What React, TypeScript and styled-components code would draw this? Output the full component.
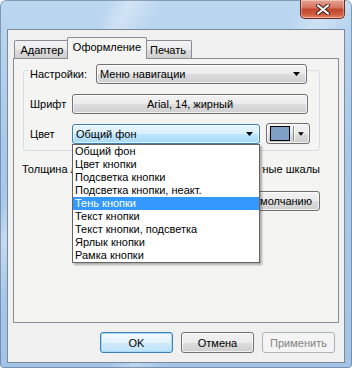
import React from 'react';
import styled, { createGlobalStyle, css } from 'styled-components';

const GlobalStyle = createGlobalStyle`
  html, body { margin: 0; padding: 0; }
  body {
    width: 352px;
    height: 368px;
    overflow: hidden;
    font-family: "Liberation Sans", Arial, sans-serif;
    font-size: 11px;
    color: #000;
  }
`;

const colorItems = [
    'Общий фон',
    'Цвет кнопки',
    'Подсветка кнопки',
    'Подсветка кнопки, неакт.',
    'Тень кнопки',
    'Текст кнопки',
    'Текст кнопки, подсветка',
    'Ярлык кнопки',
    'Рамка кнопки',
];

const Arrow = () => (
    <svg width="7" height="4" viewBox="0 0 7 4">
        <path d="M0 0h7L3.5 4z" fill="#000"/>
    </svg>
);

export default function App() {
    return (
        <>
            <GlobalStyle/>
            <Window>
                <TitleBar>
                    <CloseButton>
                        <svg width="14" height="11" viewBox="0 0 14 11">
                            <path d="M2 1.5l10 8M12 1.5l-10 8" stroke="#3b1a1a" strokeWidth="4" strokeLinecap="round"/>
                            <path d="M2 1.5l10 8M12 1.5l-10 8" stroke="#fff" strokeWidth="2.2" strokeLinecap="round"/>
                        </svg>
                    </CloseButton>
                </TitleBar>
                <Client>
                    <TabStrip>
                        <Tab $width={56}>Адаптер</Tab>
                        <Tab $width={80} $active>Оформление</Tab>
                        <Tab $width={48}>Печать</Tab>
                    </TabStrip>
                    <TabPanel>
                        <GroupBox>
                            <Header>
                                <Legend>Настройки:</Legend>
                                <DropButton $width={211}>
                                    <span>Меню навигации</span>
                                    <Arrow/>
                                </DropButton>
                            </Header>
                            <Row>
                                <Label>Шрифт</Label>
                                <PushButton $width={236}>Arial, 14, жирный</PushButton>
                            </Row>
                            <Row>
                                <Label>Цвет</Label>
                                <ComboWrap>
                                    <DropButton $width={188} $hot>
                                        <span>Общий фон</span>
                                        <Arrow/>
                                    </DropButton>
                                    <ListBox>
                                        {colorItems.map((item, i) => (
                                            <ListItem key={item} $selected={i === 4}>{item}</ListItem>
                                        ))}
                                    </ListBox>
                                </ComboWrap>
                                <ColorButton>
                                    <Swatch/>
                                    <Divider/>
                                    <Arrow/>
                                </ColorButton>
                            </Row>
                        </GroupBox>
                        <OptionsRow>
                            <ClipStart>Толщина линий</ClipStart>
                            <ClipEnd><span>Цветные шкалы</span></ClipEnd>
                        </OptionsRow>
                        <DefaultRow>
                            <PushButton $width={86}><ClipEnd><span>По умолчанию</span></ClipEnd></PushButton>
                        </DefaultRow>
                    </TabPanel>
                    <Footer>
                        <DialogButton $variant="default">OK</DialogButton>
                        <DialogButton>Отмена</DialogButton>
                        <DialogButton $variant="disabled">Применить</DialogButton>
                    </Footer>
                </Client>
            </Window>
        </>
    );
}

const Window = styled.div`
  width: 352px;
  height: 368px;
  box-sizing: border-box;
  display: flex;
  flex-direction: column;
  padding: 0 7px 5px 7px;
  border-radius: 6px 6px 4px 4px;
  background:
    linear-gradient(118deg, rgba(255,255,255,0) 0 20%, rgba(255,255,255,.35) 24%, rgba(255,255,255,0) 30% 55%, rgba(255,255,255,.3) 60%, rgba(255,255,255,0) 66%),
    linear-gradient(180deg, #bcd7f0 0%, #a9c9ea 40%, #a3c4e6 100%);
  box-shadow: inset 0 0 0 1px rgba(60, 80, 110, .45);
`;

const TitleBar = styled.div`
  height: 29px;
  display: flex;
  justify-content: flex-end;
  align-items: flex-start;
  flex-shrink: 0;
`;

const CloseButton = styled.div`
  width: 45px;
  height: 19px;
  box-sizing: border-box;
  margin-right: 0;
  display: flex;
  align-items: center;
  justify-content: center;
  border: 1px solid #6d2a24;
  border-top: none;
  border-radius: 0 0 5px 5px;
  background: linear-gradient(180deg, #e8a493 0%, #d4715d 45%, #c2452f 50%, #cf5c40 80%, #e6876c 100%);
  box-shadow: inset 0 0 0 1px rgba(255,255,255,.35);
`;

const Client = styled.div`
  flex: 1;
  display: flex;
  flex-direction: column;
  border: 1px solid #7b8a9b;
  background: #f0f0f0;
  padding: 7px 5px 8px 5px;
`;

const TabStrip = styled.div`
  display: flex;
  align-items: flex-end;
  height: 21px;
  padding-left: 2px;
  position: relative;
  z-index: 1;
`;

const Tab = styled.div<{ $width: number; $active?: boolean }>`
  width: ${p => p.$width}px;
  box-sizing: border-box;
  height: 18px;
  display: flex;
  align-items: center;
  justify-content: center;
  border: 1px solid #898c95;
  border-bottom: none;
  border-radius: 2px 2px 0 0;
  background: linear-gradient(180deg, #f3f3f3 0%, #ebebeb 50%, #dddddd 51%, #cfcfcf 100%);
  margin-left: -1px;
  ${p => p.$active && css`
    height: 22px;
    margin: 0 -2px -1px -3px;
    padding-bottom: 3px;
    background: #f4f4f2;
    position: relative;
    z-index: 2;
  `}
`;

const TabPanel = styled.div`
  height: 265px;
  box-sizing: border-box;
  border: 1px solid #898c95;
  background: #f4f4f2;
  margin-right: 0;
  padding: 11px 18px 0 9px;
  display: flex;
  flex-direction: column;
`;

const GroupBox = styled.div`
  border: 1px solid #d5dfe5;
  border-radius: 3px;
  padding: 0 9px 6px 6px;
  display: flex;
  flex-direction: column;
  gap: 9px;
`;

const Header = styled.div`
  display: flex;
  align-items: center;
  margin-top: -7px;
  margin-bottom: 1px;
`;

const Legend = styled.span`
  width: 64px;
  margin-left: -2px;
  padding: 0 2px;
  background: #f4f4f2;
  line-height: 13px;
`;

const Row = styled.div`
  display: flex;
  align-items: center;
`;

const Label = styled.span`
  width: 42px;
  flex-shrink: 0;
`;

const ComboWrap = styled.div`
  position: relative;
  margin-right: 6px;
`;

const buttonFace = css`
  border: 1px solid #707070;
  border-radius: 3px;
  background: linear-gradient(180deg, #f2f2f2 0%, #ebebeb 50%, #dddddd 51%, #cfcfcf 100%);
  box-shadow: inset 0 0 0 1px rgba(255, 255, 255, .7);
`;

const DropButton = styled.div<{ $width: number; $hot?: boolean }>`
  width: ${p => p.$width}px;
  height: 20px;
  box-sizing: border-box;
  display: flex;
  align-items: center;
  justify-content: space-between;
  padding: 0 6px 0 3px;
  ${buttonFace};
  ${p => p.$hot && css`
    border-color: #3c7fb1;
    background: linear-gradient(180deg, #eaf6fd 0%, #d9f0fc 50%, #bee6fd 51%, #a7d9f5 100%);
  `}
`;

const PushButton = styled.div<{ $width: number }>`
  width: ${p => p.$width}px;
  height: 20px;
  box-sizing: border-box;
  display: flex;
  align-items: center;
  justify-content: center;
  ${buttonFace};
`;

const ColorButton = styled.div`
  width: 44px;
  height: 21px;
  box-sizing: border-box;
  display: flex;
  align-items: center;
  padding: 0 5px 0 3px;
  ${buttonFace};
`;

const Swatch = styled.div`
  width: 24px;
  height: 15px;
  box-sizing: border-box;
  border: 1px solid #000;
  background: #7f9fc6;
`;

const Divider = styled.div`
  width: 1px;
  height: 15px;
  margin: 0 4px 0 3px;
  background: #8a8a8a;
  box-shadow: 1px 0 0 #fff;
`;

const ListBox = styled.div`
  position: absolute;
  top: 100%;
  left: 0;
  width: 100%;
  box-sizing: border-box;
  border: 1px solid #646464;
  background: #fff;
  box-shadow: 2px 2px 2px rgba(0, 0, 0, .3);
  z-index: 5;
`;

const ListItem = styled.div<{ $selected?: boolean }>`
  height: 13px;
  line-height: 13px;
  padding-left: 2px;
  white-space: nowrap;
  ${p => p.$selected && css`
    background: #3399ff;
    color: #fff;
  `}
`;

const OptionsRow = styled.div`
  display: flex;
  justify-content: space-between;
  margin: 12px 0 0 -1px;
`;

/* the parts of these texts that lie under the open list are clipped away */
const ClipStart = styled.span`
  width: 50px;
  overflow: hidden;
  white-space: nowrap;
`;

const ClipEnd = styled.span`
  width: 58px;
  display: flex;
  justify-content: flex-end;
  overflow: hidden;
  white-space: nowrap;
`;

const DefaultRow = styled.div`
  display: flex;
  justify-content: flex-end;
  margin-top: 16px;

  & ${PushButton} {
    justify-content: flex-end;
    padding-right: 7px;
  }
`;

const Footer = styled.div`
  display: flex;
  justify-content: flex-end;
  gap: 8px;
  margin-top: 9px;
  padding-right: 4px;
`;

const DialogButton = styled.div<{ $variant?: 'default' | 'disabled' }>`
  width: 73px;
  height: 21px;
  box-sizing: border-box;
  display: flex;
  align-items: center;
  justify-content: center;
  ${buttonFace};
  ${p => p.$variant === 'default' && css`
    border-color: #3c7fb1;
    background: linear-gradient(180deg, #f2f9fe 0%, #e3f3fc 50%, #cfeafb 51%, #bfe3fa 100%);
    box-shadow: inset 0 0 0 1px #a6dcfa;
  `}
  ${p => p.$variant === 'disabled' && css`
    border-color: #adb2b5;
    background: #f4f4f4;
    box-shadow: none;
    color: #838383;
  `}
`;
